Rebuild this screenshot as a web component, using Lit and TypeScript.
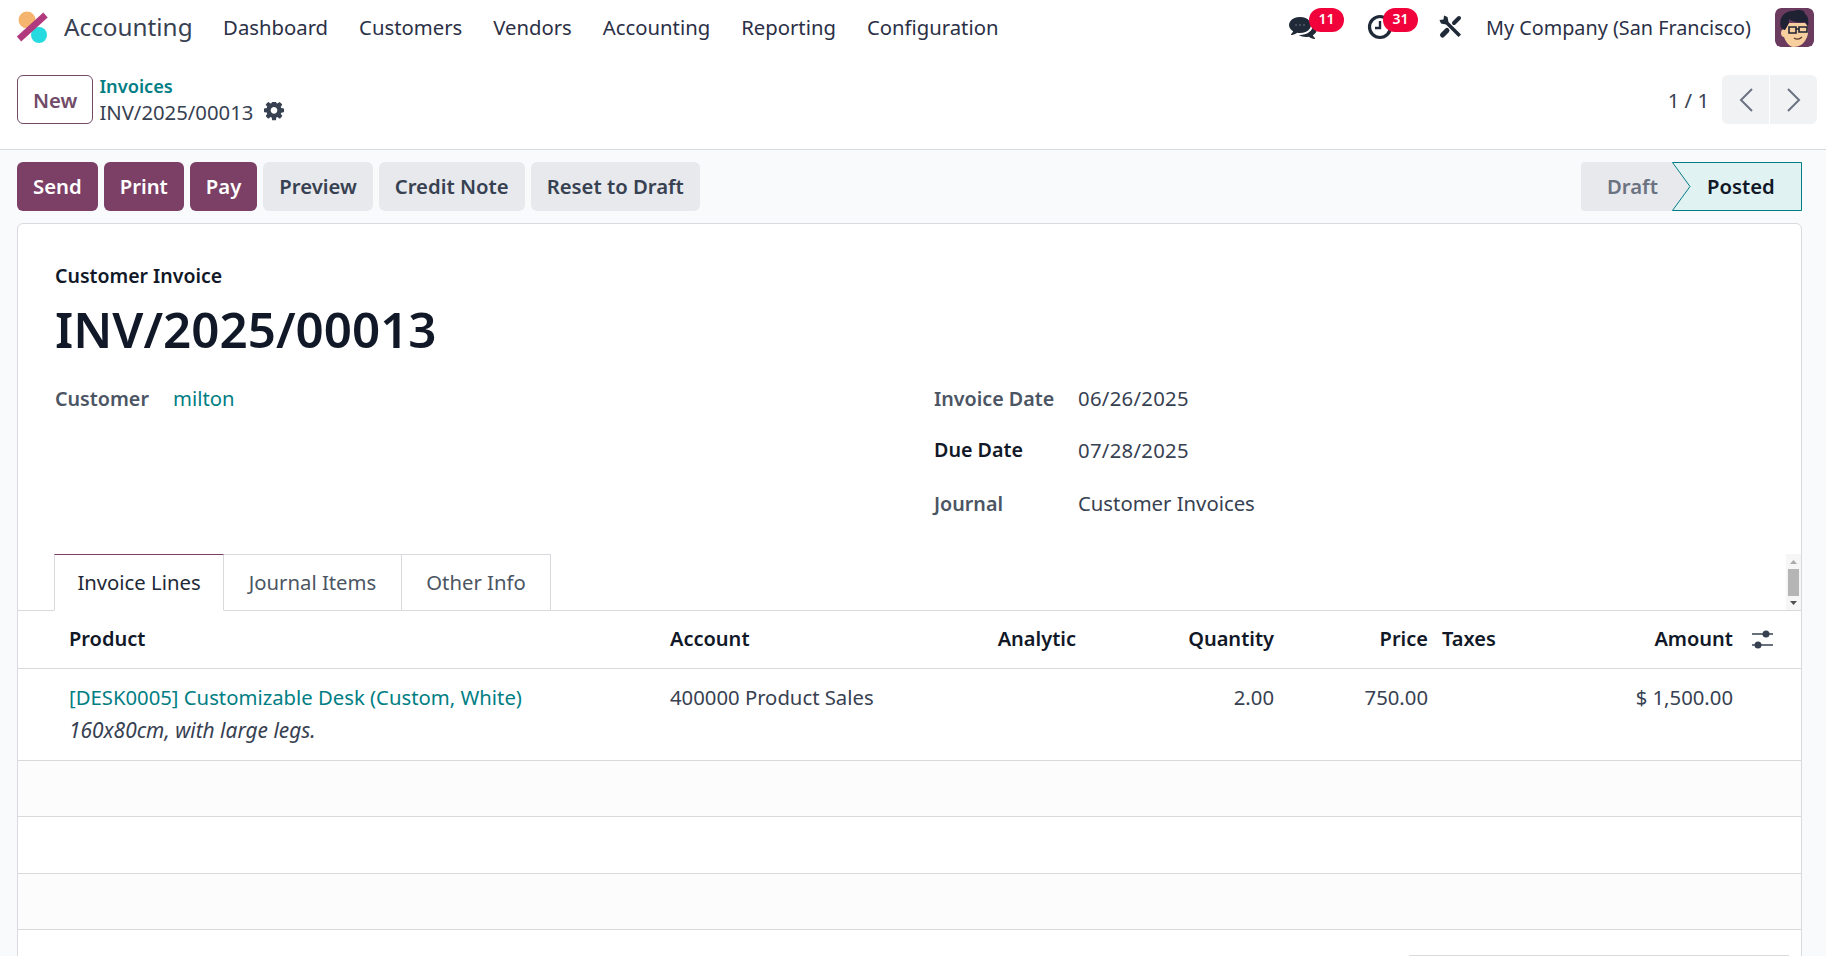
import { css, html, LitElement, svg } from 'lit';
import { customElement } from 'lit/decorators.js';

const NAV = ['Dashboard', 'Customers', 'Vendors', 'Accounting', 'Reporting', 'Configuration'];
const ACTIONS = ['Preview', 'Credit Note', 'Reset to Draft'];

const gear = svg`<path d="M1024 640q0-106-75-181t-181-75-181 75-75 181 75 181 181 75 181-75 75-181zm512-109v222q0 12-8 23t-20 13l-185 28q-19 54-39 91 35 50 107 138 10 12 10 25t-9 23q-27 37-99 108t-94 71q-12 0-26-9l-138-108q-44 23-91 38-16 136-29 186-7 28-36 28h-222q-14 0-24.500-8.500t-11.500-21.500l-28-184q-49-16-90-37l-141 107q-10 9-25 9-14 0-25-11-126-114-165-168-7-10-7-23 0-12 8-23 15-21 51-66.500t54-70.500q-27-50-41-99l-183-27q-13-2-21-12.500t-8-23.500v-222q0-12 8-23t19-13l186-28q14-46 39-92-40-57-107-138-10-12-10-24 0-10 9-23 26-36 98.500-107.500t94.500-71.500q13 0 26 10l138 107q44-23 91-38 16-136 29-186 7-28 36-28h222q14 0 24.500 8.500t11.500 21.500l28 184q49 16 90 37l142-107q9-9 24-9 13 0 25 10 129 119 165 170 7 8 7 22 0 12-8 23-15 21-51 66.500t-54 70.500q26 50 41 98l183 28q13 2 21 12.500t8 23.500z"/>`;

@customElement('app-root')
export class AppRoot extends LitElement {
    static override styles = css`
        :host {
            display: block;
            height: 956px;
            overflow: hidden;
            background: #fff;
            color: #374151;
            font-family: 'Noto Sans', 'Open Sans', sans-serif;
            font-size: 20.3px;
        }
        .navbar {
            display: flex;
            align-items: center;
            height: 54px;
            padding: 0 12px 0 16px;
        }
        .logo {
            width: 32px;
            height: 32px;
            flex: none;
            margin-right: 16px;
        }
        .brand {
            font-size: 24.3px;
            color: #374151;
            margin-right: 15px;
            padding-bottom: 2px;
        }
        .nav-item {
            padding: 0 15.5px;
            color: #2b3046;
        }
        .spacer {
            flex: 1;
        }
        .systray {
            display: flex;
            align-items: center;
            color: #1f2937;
        }
        .tray-icon {
            position: relative;
            display: block;
            width: 30px;
            height: 30px;
        }
        .tray-icon svg {
            display: block;
            margin-top: 1px;
        }
        .badge {
            position: absolute;
            top: -4px;
            left: 20px;
            width: 35px;
            height: 24px;
            border-radius: 12px;
            background: #f1023a;
            color: #fff;
            font-size: 14px;
            font-weight: 600;
            line-height: 22px;
            text-align: center;
        }
        .badge.clock {
            left: 17px;
        }
        .tray-icon.msg {
            margin-right: 47px;
        }
        .tray-icon.act {
            margin-right: 42px;
        }
        .company {
            margin: 0 24px 0 22px;
            color: #2b3046;
            font-size: 19.8px;
            white-space: nowrap;
        }
        .avatar {
            display: block;
            width: 39px;
            height: 39px;
            border-radius: 6px;
        }
        .control {
            display: flex;
            align-items: center;
            height: 96px;
            padding: 21px 9px 25px 17px;
            box-sizing: border-box;
            border-bottom: 1px solid #d8dadd;
        }
        .btn {
            display: flex;
            align-items: center;
            height: 49px;
            padding: 0 16px 2px;
            border-radius: 6px;
            box-sizing: border-box;
            font-weight: 600;
            white-space: nowrap;
        }
        .btn.new {
            border: 1px solid #714b67;
            background: #fff;
            color: #714b67;
            padding: 0 15px;
            margin-right: 6px;
        }
        .crumbs {
            display: flex;
            flex-direction: column;
            gap: 1px;
            margin-top: -1px;
        }
        .crumb-link {
            color: #017e84;
            font-size: 18.2px;
            font-weight: 600;
            line-height: 24px;
        }
        .crumb-current {
            display: flex;
            align-items: center;
            gap: 11px;
            line-height: 26px;
        }
        .gear {
            width: 20px;
            height: 20px;
            fill: #374151;
        }
        .pager-text {
            margin-right: 13px;
            white-space: nowrap;
        }
        .pager-btn {
            display: flex;
            align-items: center;
            justify-content: center;
            width: 47px;
            height: 49px;
            background: #f1f2f4;
        }
        .pager-btn.prev {
            border-radius: 6px 0 0 6px;
            margin-right: 1px;
        }
        .pager-btn.next {
            border-radius: 0 6px 6px 0;
        }
        .chev {
            width: 16px;
            height: 26px;
            fill: none;
            stroke: #6b7280;
            stroke-width: 2;
        }
        .workspace {
            background: #f9fafb;
            padding: 12px 24px 0 17px;
            height: 806px;
        }
        .actions {
            display: flex;
            gap: 6px;
            margin-bottom: 12px;
        }
        .btn.primary {
            background: #7c3f65;
            color: #fff;
        }
        .btn.secondary {
            background: #e7e9ed;
            color: #374151;
        }
        .status {
            display: flex;
            margin-left: auto;
            height: 49px;
        }
        .st-draft {
            display: flex;
            align-items: center;
            width: 91px;
            padding: 0 0 2px 26px;
            box-sizing: border-box;
            background: #e7e9ed;
            border-radius: 4px 0 0 4px;
            color: #6b7280;
            font-weight: 600;
        }
        .st-posted {
            position: relative;
            display: flex;
            align-items: center;
            width: 130px;
            padding: 0 0 2px 35px;
            box-sizing: border-box;
            color: #111827;
            font-weight: 600;
        }
        .st-shape {
            position: absolute;
            inset: 0;
            width: 100%;
            height: 100%;
        }
        .st-posted span {
            position: relative;
        }
        .card {
            background: #fff;
            border: 1px solid #d8dadd;
            border-radius: 6px 6px 0 0;
            height: 800px;
        }
        .head {
            padding: 38px 36px 0 37px;
        }
        .move-type {
            color: #111827;
            font-weight: 600;
            font-size: 19.5px;
            line-height: 27px;
        }
        h1 {
            margin: 0;
            color: #111827;
            font-size: 49.3px;
            font-weight: 600;
            line-height: 68px;
            margin-top: 6px;
        }
        .fields {
            display: grid;
            grid-template-columns: 879px 1fr;
            margin-top: 22px;
        }
        .field {
            display: flex;
            align-items: center;
            height: 26px;
        }
        .label {
            color: #4b5563;
            font-size: 19.7px;
            font-weight: 600;
        }
        .label.strong {
            color: #111827;
        }
        .customer .label {
            width: 118px;
        }
        .milton {
            color: #017e84;
        }
        .dates {
            display: flex;
            flex-direction: column;
            gap: 25.5px;
        }
        .dates .field.journal {
            margin-top: 2px;
        }
        .dates .label {
            width: 144px;
        }
        .date-value {
            letter-spacing: 0.3px;
        }
        .tabs {
            display: flex;
            position: relative;
            height: 56px;
            margin-top: 38px;
            padding-left: 36px;
            border-bottom: 1px solid #d8dadd;
        }
        .tab {
            display: flex;
            align-items: center;
            justify-content: center;
            height: 57px;
            box-sizing: border-box;
            border: 1px solid #d8dadd;
            border-left: none;
            padding-bottom: 2px;
            color: #4b5563;
        }
        .tab.active {
            width: 170px;
            border-left: 1px solid #d8dadd;
            border-top: 1px solid #7c3f65;
            border-bottom-color: #fff;
            color: #1f2937;
        }
        .tab.journal {
            width: 178px;
        }
        .tab.other {
            width: 149px;
        }
        .sb {
            position: absolute;
            top: 0;
            right: 0;
            width: 15px;
            height: 56px;
            background: #f6f6f6;
        }
        .sb svg {
            display: block;
        }
        .row {
            display: grid;
            grid-template-columns: 44px 601px 237px 183px 198px 154px 165px 140px 1fr;
            box-sizing: border-box;
            border-bottom: 1px solid #d8dadd;
        }
        .row.header {
            height: 58px;
            align-items: center;
            padding-bottom: 1px;
            color: #111827;
            font-size: 20px;
            font-weight: 600;
        }
        .row.line {
            height: 92px;
            padding-top: 13px;
            color: #374151;
        }
        .row.empty {
            height: 56.4px;
        }
        .row.striped {
            background: #fcfcfc;
        }
        .cell {
            padding: 0 7px;
            line-height: 30px;
        }
        .right {
            text-align: right;
        }
        .product-link {
            color: #017e84;
        }
        .note {
            font-size: 20.9px;
            font-style: italic;
            margin-top: 3px;
        }
        .sliders {
            display: block;
            width: 22px;
            height: 22px;
            margin-left: 12px;
        }
        .totals {
            margin: 25px 12px 0 1391px;
            border-top: 1px solid #d8dadd;
        }
    `;

    private renderLogo() {
        return html`<svg class="logo" viewBox="0 0 32 32">
            <circle cx="11" cy="9" r="8.500" fill="#f5b56e"></circle>
            <circle cx="23" cy="24" r="8" fill="#25dbdf"></circle>
            <path d="M29.500 4 L3 28" stroke="#b13a7e" stroke-width="6.500"></path>
        </svg>`;
    }

    private renderAvatar() {
        return html`<svg class="avatar" viewBox="0 0 39 39">
            <rect width="39" height="39" rx="6" fill="#6a3a5f"></rect>
            <path d="M6 25 C6 21 9 21 10 22 L14 15 L30 15 C34 18 34 27 31 31 C29 36 24 39 18 39 C13 38 10 32 9 29 C7 29 6 27 6 25 Z" fill="#f7cf9e"></path>
            <path d="M6 20 C3 10 9 3 18 3 C24 1 30 2 30 6 C33 8 34 12 33 18 L30 14 C24 15 17 14 14 11 C15 15 12 18 10 22 Z" fill="#1f2233"></path>
            <path d="M14 19 H21 V25 H14 Z M24 19 H32 V24 H24 Z M21 21 H24" fill="none" stroke="#1f2233" stroke-width="1.600"></path>
            <path d="M19 30 C22 32 25 31 27 29" fill="none" stroke="#5b3a2e" stroke-width="1.300"></path>
        </svg>`;
    }

    private renderStatus() {
        return html`<div class="status">
            <div class="st-draft">Draft</div>
            <div class="st-posted">
                <svg class="st-shape" viewBox="0 0 130 49">
                    <path d="M0 0 L18 24.500 L0 49 Z" fill="#e7e9ed"></path>
                    <path d="M0.500 0.500 H129.500 V48.500 H0.500 L18 24.500 Z" fill="#e0f2f2" stroke="#017e84"></path>
                </svg>
                <span>Posted</span>
            </div>
        </div>`;
    }

    override render() {
        return html`
            <div class="navbar">
                ${this.renderLogo()}
                <span class="brand">Accounting</span>
                ${NAV.map((n) => html`<span class="nav-item">${n}</span>`)}
                <div class="spacer"></div>
                <div class="systray">
                    <div class="tray-icon msg">
                        <svg width="28" height="28" viewBox="0 0 1792 1792" fill="#1f2937">
                            <path d="M1408 768q0 139-94 257t-256.500 186.500-353.500 68.500q-86 0-176-16-124 88-278 128-36 9-86 16h-3q-11 0-20.500-8t-11.500-21q-1-3-1-6.500t.5-6.500 2-6l2.500-5 3.500-5.500 4-5 4.500-5 4-4.500q5-6 23-25t26-29.500 22.500-29 25-38.500 20.500-44q-124-72-195-177t-71-224q0-139 94-257t256.500-186.500 353.500-68.500 353.500 68.500 256.500 186.500 94 257zm384 256q0 120-71 224.500t-195 176.500q10 24 20.500 44t25 38.500 22.500 29 26 29.500 23 25q1 1 4 4.500t4.500 5 4 5 3.500 5.500l2.500 5 2 6 .5 6.500-1 6.500q-3 14-13 22t-22 7q-50-7-86-16-154-40-278-128-90 16-176 16-271 0-472-132 58 4 88 4 161 0 309-45t264-129q125-92 192-212t67-254q0-77-23-152 129 71 204 178t75 230z"></path>
                            <circle cx="450" cy="768" r="60" fill="#566074"></circle>
                            <circle cx="704" cy="768" r="60" fill="#566074"></circle>
                            <circle cx="958" cy="768" r="60" fill="#566074"></circle>
                        </svg>
                        <span class="badge">11</span>
                    </div>
                    <div class="tray-icon act">
                        <svg width="28" height="28" viewBox="0 0 28 28" fill="none" stroke="#1f2937">
                            <circle cx="14" cy="14" r="10.500" stroke-width="3.200"></circle>
                            <path d="M14 8 V15 H9" stroke-width="2.400"></path>
                        </svg>
                        <span class="badge clock">31</span>
                    </div>
                    <svg width="26" height="26" viewBox="0 0 26 26" fill="#1f2937">
                        <path d="M6 1.500 L9.500 3 L10.500 8 L23 20.500 L20.500 23 L8 10.500 L3 9.500 L1.500 6 L5.500 5.500 Z"></path>
                        <path d="M21 4 L16 9" stroke="#1f2937" stroke-width="4" stroke-linecap="round"></path>
                        <path d="M9 16.500 L4.500 21" stroke="#1f2937" stroke-width="5" stroke-linecap="round"></path>
                    </svg>
                    <span class="company">My Company (San Francisco)</span>
                    ${this.renderAvatar()}
                </div>
            </div>

            <div class="control">
                <div class="btn new">New</div>
                <div class="crumbs">
                    <span class="crumb-link">Invoices</span>
                    <span class="crumb-current">
                        INV/2025/00013
                        <svg class="gear" viewBox="0 0 1536 1536">${gear}</svg>
                    </span>
                </div>
                <div class="spacer"></div>
                <span class="pager-text">1 / 1</span>
                <div class="pager-btn prev">
                    <svg class="chev" viewBox="0 0 16 26"><path d="M14 2 L3 13 L14 24"></path></svg>
                </div>
                <div class="pager-btn next">
                    <svg class="chev" viewBox="0 0 16 26"><path d="M2 2 L13 13 L2 24"></path></svg>
                </div>
            </div>

            <div class="workspace">
                <div class="actions">
                    <div class="btn primary">Send</div>
                    <div class="btn primary">Print</div>
                    <div class="btn primary">Pay</div>
                    ${ACTIONS.map((a) => html`<div class="btn secondary">${a}</div>`)}
                    ${this.renderStatus()}
                </div>

                <div class="card">
                    <div class="head">
                        <div class="move-type">Customer Invoice</div>
                        <h1>INV/2025/00013</h1>
                        <div class="fields">
                            <div class="field customer">
                                <span class="label">Customer</span>
                                <span class="milton">milton</span>
                            </div>
                            <div class="dates">
                                <div class="field"><span class="label">Invoice Date</span><span class="date-value">06/26/2025</span></div>
                                <div class="field"><span class="label strong">Due Date</span><span class="date-value">07/28/2025</span></div>
                                <div class="field journal"><span class="label">Journal</span><span>Customer Invoices</span></div>
                            </div>
                        </div>
                    </div>

                    <div class="tabs">
                        <div class="tab active">Invoice Lines</div>
                        <div class="tab journal">Journal Items</div>
                        <div class="tab other">Other Info</div>
                        <div class="sb">
                            <svg width="15" height="56" viewBox="0 0 15 56">
                                <path d="M4 10 L7.500 6 L11 10 Z" fill="#aaa"></path>
                                <rect x="2" y="15" width="11" height="27" fill="#b5b5b5"></rect>
                                <path d="M4 47 L7.500 51 L11 47 Z" fill="#505050"></path>
                            </svg>
                        </div>
                    </div>

                    <div class="row header">
                        <div></div>
                        <div class="cell">Product</div>
                        <div class="cell">Account</div>
                        <div class="cell right">Analytic</div>
                        <div class="cell right">Quantity</div>
                        <div class="cell right">Price</div>
                        <div class="cell">Taxes</div>
                        <div class="cell right">Amount</div>
                        <div>
                            <svg class="sliders" viewBox="0 0 22 22" fill="#374151" stroke="#374151">
                                <path d="M0 6 H21 M0 17 H21" stroke-width="1.500"></path>
                                <circle cx="14" cy="6" r="3.500" stroke="none"></circle>
                                <circle cx="6" cy="17" r="3.500" stroke="none"></circle>
                            </svg>
                        </div>
                    </div>

                    <div class="row line">
                        <div></div>
                        <div class="cell">
                            <div class="product-link">[DESK0005] Customizable Desk (Custom, White)</div>
                            <div class="note">160x80cm, with large legs.</div>
                        </div>
                        <div class="cell">400000 Product Sales</div>
                        <div class="cell"></div>
                        <div class="cell right">2.00</div>
                        <div class="cell right">750.00</div>
                        <div class="cell"></div>
                        <div class="cell right">$ 1,500.00</div>
                        <div></div>
                    </div>

                    <div class="row empty striped"></div>
                    <div class="row empty"></div>
                    <div class="row empty striped"></div>
                    <div class="totals"></div>
                </div>
            </div>
        `;
    }
}
